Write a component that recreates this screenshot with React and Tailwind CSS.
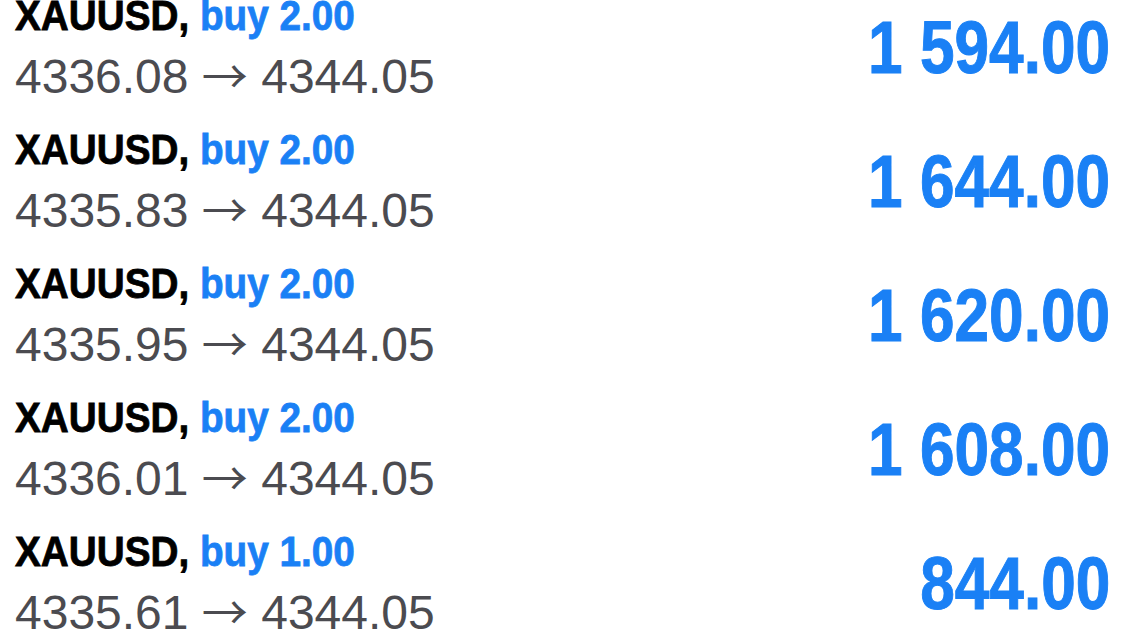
import React from 'react';

const trades = [
  { symbol: 'XAUUSD', side: 'buy', volume: '2.00', open: '4336.08', close: '4344.05', profit: '1 594.00' },
  { symbol: 'XAUUSD', side: 'buy', volume: '2.00', open: '4335.83', close: '4344.05', profit: '1 644.00' },
  { symbol: 'XAUUSD', side: 'buy', volume: '2.00', open: '4335.95', close: '4344.05', profit: '1 620.00' },
  { symbol: 'XAUUSD', side: 'buy', volume: '2.00', open: '4336.01', close: '4344.05', profit: '1 608.00' },
  { symbol: 'XAUUSD', side: 'buy', volume: '1.00', open: '4335.61', close: '4344.05', profit: '844.00' },
];

// condensed bold look: Liberation Sans Bold squeezed horizontally
const sans = { fontFamily: '"Liberation Sans", Arial, sans-serif' };
const arrowFont = { fontFamily: '"Noto Sans CJK JP", "DejaVu Sans", sans-serif' };

function TradeRow({ t }) {
  return (
    <div className="flex items-start justify-between h-[134px] pl-[15px] pr-[15px]">
      <div className="mt-[11px]">
        <div
          className="inline-block origin-left scale-x-[0.9] text-[43px] leading-[50px] font-bold text-black whitespace-nowrap [-webkit-text-stroke-width:0.8px]"
          style={sans}
        >
          {t.symbol}, <span className="text-[#1a80f5]">{t.side} {t.volume}</span>
        </div>
        <div className="mt-[9px] h-[56px] text-[48px] leading-[56px] text-[#4b4b50] whitespace-nowrap" style={sans}>
          {t.open}{' '}
          <span className="text-[46px] leading-none font-normal" style={arrowFont}>→</span>{' '}
          {t.close}
        </div>
      </div>
      <div
        className="mt-[29px] inline-block origin-right scale-x-[0.84] text-[74px] leading-[80px] font-bold text-[#1a80f5] whitespace-nowrap [-webkit-text-stroke-width:1px]"
        style={sans}
      >
        {t.profit}
      </div>
    </div>
  );
}

export default function App() {
  return (
    <div className="w-[1125px] h-[633px] overflow-hidden bg-white">
      <div className="-mt-[21px]">
        {trades.map((t, i) => (
          <TradeRow key={i} t={t} />
        ))}
      </div>
    </div>
  );
}
